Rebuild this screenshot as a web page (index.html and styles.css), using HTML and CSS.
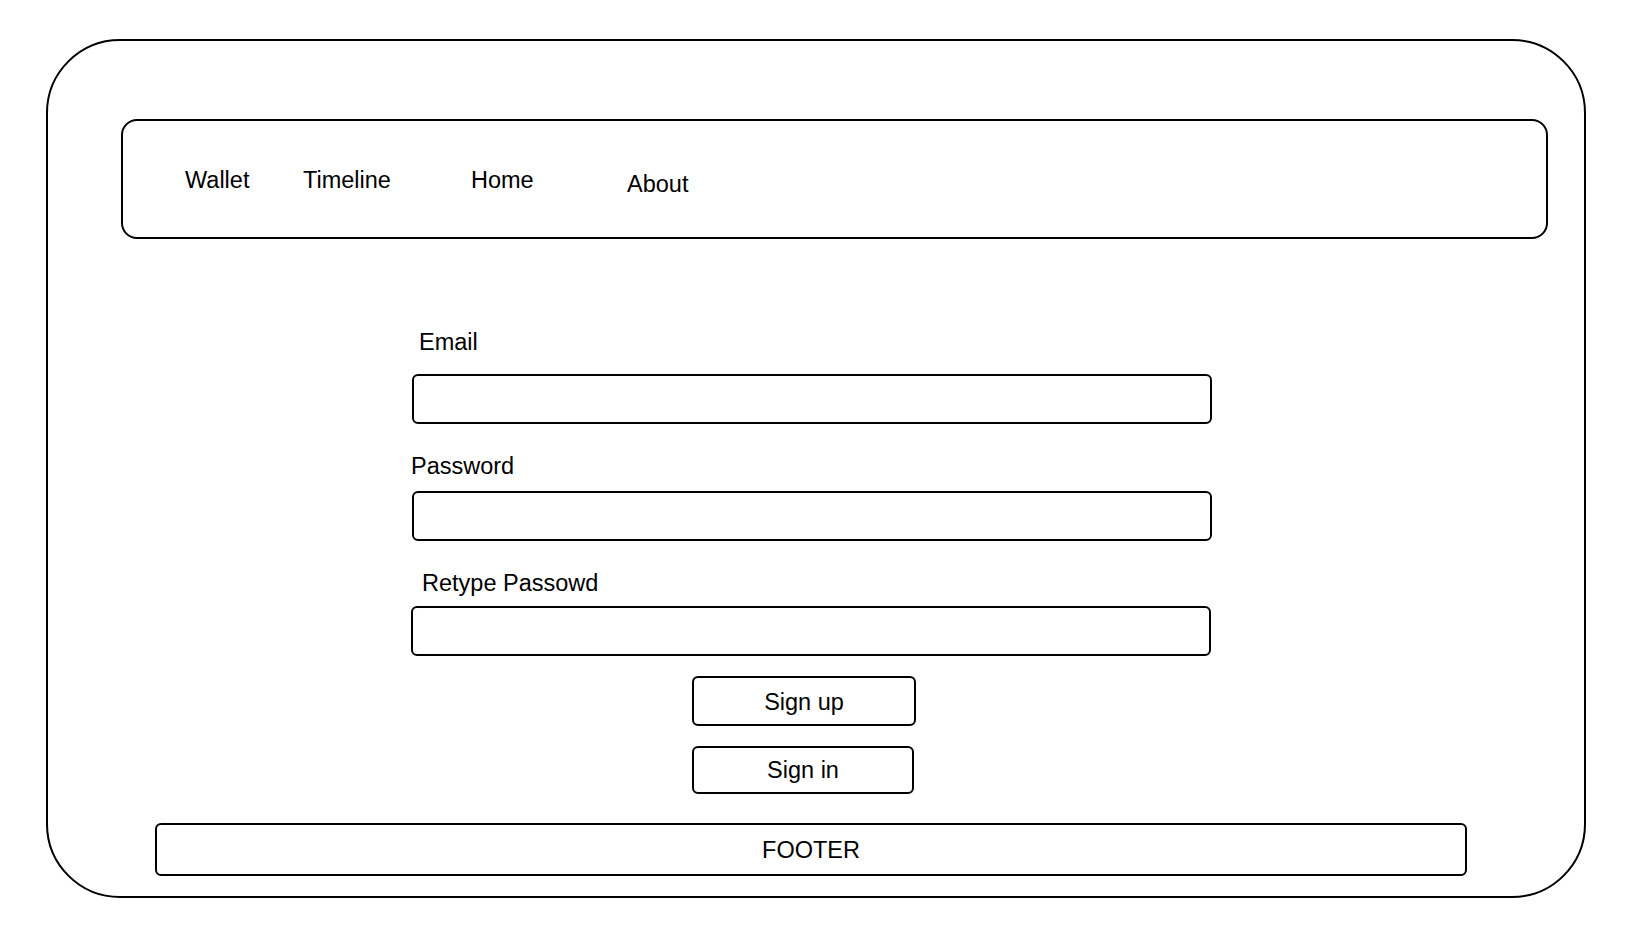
FILE: index.html
```html
<!DOCTYPE html>
<html lang="en">
<head>
<meta charset="utf-8">
<title>Sign up</title>
<link rel="stylesheet" href="styles.css">
</head>
<body>
<div class="frame">
  <nav class="nav">
    <span class="nav-item nav-wallet">Wallet</span>
    <span class="nav-item nav-timeline">Timeline</span>
    <span class="nav-item nav-home">Home</span>
    <span class="nav-item nav-about">About</span>
  </nav>
  <form class="form">
    <label class="label label-email">Email</label>
    <input class="field field-email" type="text">
    <label class="label label-password">Password</label>
    <input class="field field-password" type="password">
    <label class="label label-retype">Retype Passowd</label>
    <input class="field field-retype" type="password">
  </form>
  <button class="btn btn-signup" type="button">Sign up</button>
  <button class="btn btn-signin" type="button">Sign in</button>
  <footer class="footer">FOOTER</footer>
</div>
</body>
</html>
```

FILE: styles.css
```css
* {
  box-sizing: border-box;
}

html, body {
  margin: 0;
  padding: 0;
  background: #ffffff;
}

body {
  font-family: "Liberation Sans", Arial, Helvetica, sans-serif;
  font-size: 23.5px;
  line-height: 26px;
  color: #000000;
}

.frame {
  margin: 39px 0 0 46px;
  width: 1540px;
  height: 859px;
  border: 2px solid #000;
  border-radius: 74px;
  display: flex;
  flex-direction: column;
  align-items: flex-start;
}

.nav {
  margin: 78px 0 0 73px;
  width: 1427px;
  height: 120px;
  border: 2px solid #000;
  border-radius: 16px;
  display: flex;
  align-items: flex-start;
  padding: 46px 0 0 62px;
}

.nav-item {
  display: block;
  white-space: nowrap;
  flex: none;
}

.nav-wallet { width: 118px; }
.nav-timeline { width: 168px; }
.nav-home { width: 156px; }
.nav-about { margin-top: 4px; }

.form {
  margin: 0 0 0 364px;
  width: 800px;
  display: flex;
  flex-direction: column;
  align-items: flex-start;
}

.label {
  display: block;
  height: 26px;
  white-space: nowrap;
}

.label-email { margin-top: 90px; padding-left: 7px; }
.label-password { margin-top: 29px; padding-left: 0; margin-left: -1px; }
.label-retype { margin-top: 29px; padding-left: 10px; }

.field {
  display: block;
  width: 800px;
  height: 50px;
  border: 2px solid #000;
  border-radius: 6px;
  background: #fff;
  padding: 0;
  margin: 0;
  font: inherit;
  outline: none;
}

.field-email { margin-top: 19px; }
.field-password { margin-top: 12px; }
.field-retype { margin-top: 10px; margin-left: -1px; }

.btn {
  display: block;
  margin: 20px 0 0 644px;
  padding: 0;
  border: 2px solid #000;
  border-radius: 6px;
  background: #fff;
  color: #000;
  font: inherit;
  line-height: 26px;
  text-align: center;
}

.btn-signup {
  width: 224px;
  height: 50px;
  padding-top: 1px;
}

.btn-signin {
  width: 222px;
  height: 48px;
}

.footer {
  margin: 29px 0 0 107px;
  width: 1312px;
  height: 53px;
  border: 2px solid #000;
  border-radius: 6px;
  display: flex;
  align-items: center;
  justify-content: center;
}
```
